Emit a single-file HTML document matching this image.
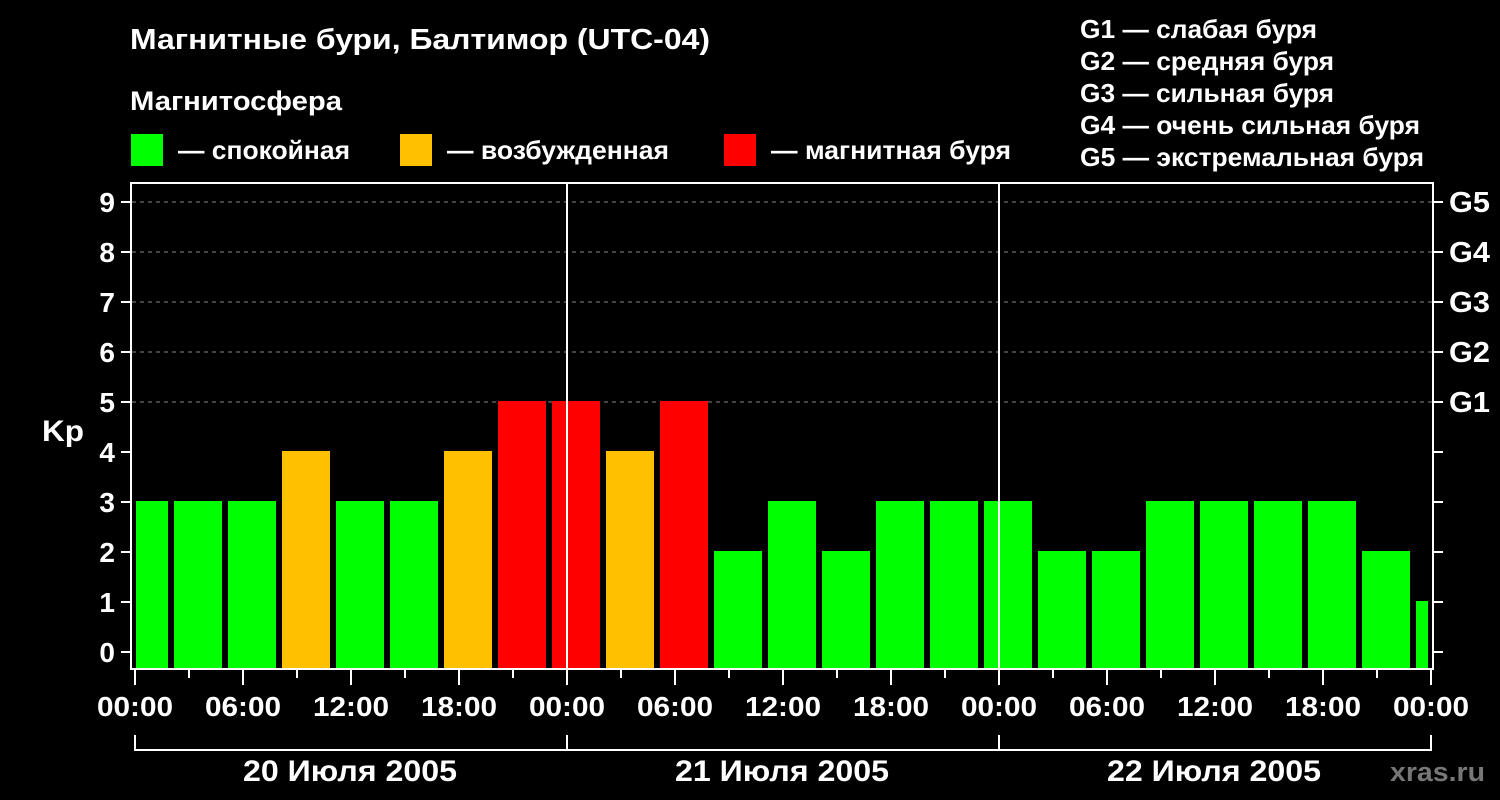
<!DOCTYPE html>
<html><head><meta charset="utf-8"><style>
html,body{margin:0;padding:0;background:#000;}
svg{display:block;}
text{font-family:"Liberation Sans",Arial,sans-serif;font-weight:bold;fill:#fff;}
</style></head><body>
<svg width="1500" height="800" viewBox="0 0 1500 800" xmlns="http://www.w3.org/2000/svg">
<rect width="1500" height="800" fill="#000"/>
<text x="130" y="49" font-size="29" textLength="580" lengthAdjust="spacingAndGlyphs">Магнитные бури, Балтимор (UTC-04)</text>
<text x="130" y="110" font-size="27" textLength="212" lengthAdjust="spacingAndGlyphs">Магнитосфера</text>
<rect x="131" y="134" width="32" height="32" fill="#00ff00"/>
<text x="178" y="159" font-size="26" textLength="172" lengthAdjust="spacingAndGlyphs">— спокойная</text>
<rect x="400" y="134" width="32" height="32" fill="#ffc000"/>
<text x="447" y="159" font-size="26" textLength="222" lengthAdjust="spacingAndGlyphs">— возбужденная</text>
<rect x="724" y="134" width="32" height="32" fill="#ff0000"/>
<text x="771" y="159" font-size="26" textLength="240" lengthAdjust="spacingAndGlyphs">— магнитная буря</text>
<g font-size="26">
<text x="1080" y="38" textLength="237" lengthAdjust="spacingAndGlyphs">G1 — слабая буря</text>
<text x="1080" y="70" textLength="254" lengthAdjust="spacingAndGlyphs">G2 — средняя буря</text>
<text x="1080" y="102" textLength="254" lengthAdjust="spacingAndGlyphs">G3 — сильная буря</text>
<text x="1080" y="134" textLength="340" lengthAdjust="spacingAndGlyphs">G4 — очень сильная буря</text>
<text x="1080" y="166" textLength="344" lengthAdjust="spacingAndGlyphs">G5 — экстремальная буря</text>
</g>
<g stroke="#888" stroke-width="1" stroke-dasharray="4,4">
<line x1="132" y1="202" x2="1432" y2="202"/>
<line x1="132" y1="252" x2="1432" y2="252"/>
<line x1="132" y1="302" x2="1432" y2="302"/>
<line x1="132" y1="352" x2="1432" y2="352"/>
<line x1="132" y1="402" x2="1432" y2="402"/>
</g>
<g fill="#00ff00">
<rect x="136" y="501" width="32" height="167"/>
<rect x="174" y="501" width="48" height="167"/>
<rect x="228" y="501" width="48" height="167"/>
<rect x="336" y="501" width="48" height="167"/>
<rect x="390" y="501" width="48" height="167"/>
<rect x="714" y="551" width="48" height="117"/>
<rect x="768" y="501" width="48" height="167"/>
<rect x="822" y="551" width="48" height="117"/>
<rect x="876" y="501" width="48" height="167"/>
<rect x="930" y="501" width="48" height="167"/>
<rect x="984" y="501" width="48" height="167"/>
<rect x="1038" y="551" width="48" height="117"/>
<rect x="1092" y="551" width="48" height="117"/>
<rect x="1146" y="501" width="48" height="167"/>
<rect x="1200" y="501" width="48" height="167"/>
<rect x="1254" y="501" width="48" height="167"/>
<rect x="1308" y="501" width="48" height="167"/>
<rect x="1362" y="551" width="48" height="117"/>
<rect x="1416" y="601" width="12" height="67"/>
</g>
<g fill="#ffc000">
<rect x="282" y="451" width="48" height="217"/>
<rect x="444" y="451" width="48" height="217"/>
<rect x="606" y="451" width="48" height="217"/>
</g>
<g fill="#ff0000">
<rect x="498" y="401" width="48" height="267"/>
<rect x="552" y="401" width="48" height="267"/>
<rect x="660" y="401" width="48" height="267"/>
</g>
<g stroke="#fff" stroke-width="2" fill="none">
<line x1="567" y1="183" x2="567" y2="668"/>
<line x1="999" y1="183" x2="999" y2="668"/>
<rect x="131" y="183" width="1302" height="486"/>
<path d="M121 652H131M121 602H131M121 552H131M121 502H131M121 452H131M121 402H131M121 352H131M121 302H131M121 252H131M121 202H131"/>
<path d="M1433 652H1443M1433 602H1443M1433 552H1443M1433 502H1443M1433 452H1443M1433 402H1443M1433 352H1443M1433 302H1443M1433 252H1443M1433 202H1443"/>
<path d="M135 670V685M243 670V685M351 670V685M459 670V685M567 670V685M675 670V685M783 670V685M891 670V685M999 670V685M1107 670V685M1215 670V685M1323 670V685M1431 670V685"/>
<path d="M189 670V678M297 670V678M405 670V678M513 670V678M621 670V678M729 670V678M837 670V678M945 670V678M1053 670V678M1161 670V678M1269 670V678M1377 670V678"/>
<path d="M135 735V750H1431V735M567 735V750M999 735V750"/>
</g>
<g font-size="28" text-anchor="end">
<text x="115" y="662">0</text>
<text x="115" y="612">1</text>
<text x="115" y="562">2</text>
<text x="115" y="512">3</text>
<text x="115" y="462">4</text>
<text x="115" y="412">5</text>
<text x="115" y="362">6</text>
<text x="115" y="312">7</text>
<text x="115" y="262">8</text>
<text x="115" y="212">9</text>
</g>
<text x="42" y="441" font-size="30" textLength="42" lengthAdjust="spacingAndGlyphs">Kp</text>
<g font-size="29">
<text x="1449" y="412" textLength="41" lengthAdjust="spacingAndGlyphs">G1</text>
<text x="1449" y="362" textLength="41" lengthAdjust="spacingAndGlyphs">G2</text>
<text x="1449" y="312" textLength="41" lengthAdjust="spacingAndGlyphs">G3</text>
<text x="1449" y="262" textLength="41" lengthAdjust="spacingAndGlyphs">G4</text>
<text x="1449" y="212" textLength="41" lengthAdjust="spacingAndGlyphs">G5</text>
</g>
<g font-size="28">
<text x="97" y="716" textLength="76" lengthAdjust="spacingAndGlyphs">00:00</text>
<text x="205" y="716" textLength="76" lengthAdjust="spacingAndGlyphs">06:00</text>
<text x="313" y="716" textLength="76" lengthAdjust="spacingAndGlyphs">12:00</text>
<text x="421" y="716" textLength="76" lengthAdjust="spacingAndGlyphs">18:00</text>
<text x="529" y="716" textLength="76" lengthAdjust="spacingAndGlyphs">00:00</text>
<text x="637" y="716" textLength="76" lengthAdjust="spacingAndGlyphs">06:00</text>
<text x="745" y="716" textLength="76" lengthAdjust="spacingAndGlyphs">12:00</text>
<text x="853" y="716" textLength="76" lengthAdjust="spacingAndGlyphs">18:00</text>
<text x="961" y="716" textLength="76" lengthAdjust="spacingAndGlyphs">00:00</text>
<text x="1069" y="716" textLength="76" lengthAdjust="spacingAndGlyphs">06:00</text>
<text x="1177" y="716" textLength="76" lengthAdjust="spacingAndGlyphs">12:00</text>
<text x="1285" y="716" textLength="76" lengthAdjust="spacingAndGlyphs">18:00</text>
<text x="1393" y="716" textLength="76" lengthAdjust="spacingAndGlyphs">00:00</text>
</g>
<g font-size="30">
<text x="243" y="781" textLength="214" lengthAdjust="spacingAndGlyphs">20 Июля 2005</text>
<text x="675" y="781" textLength="214" lengthAdjust="spacingAndGlyphs">21 Июля 2005</text>
<text x="1107" y="781" textLength="214" lengthAdjust="spacingAndGlyphs">22 Июля 2005</text>
</g>
<text x="1390" y="781" font-size="27" textLength="95" lengthAdjust="spacingAndGlyphs" style="fill:#777">xras.ru</text>
</svg>
</body></html>
